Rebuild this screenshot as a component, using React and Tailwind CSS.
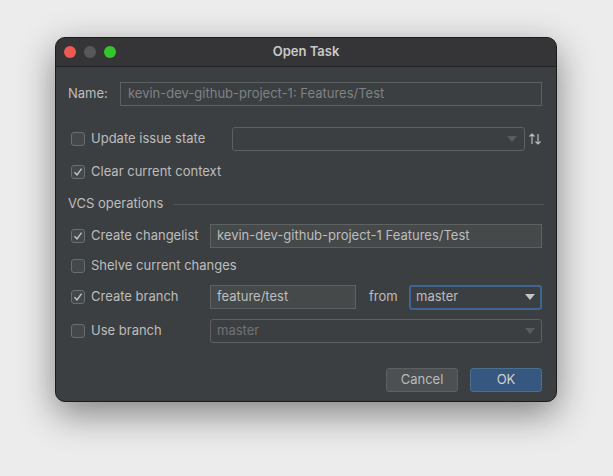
import React from "react";

function Check({ checked }) {
  return (
    <div className="w-[14px] h-[14px] rounded-[3px] border border-[#6b6e70] bg-[#43484a] flex items-center justify-center shrink-0">
      {checked && (
        <svg width="10" height="10" viewBox="0 0 10 10">
          <path d="M1.5 5.2 L4 7.8 L8.6 1.6" fill="none" stroke="#c4c4c4" strokeWidth="1.4" />
        </svg>
      )}
    </div>
  );
}

function Arrow({ color = "#c4c4c4" }) {
  return (
    <svg width="10" height="6" viewBox="0 0 10 6">
      <path d="M0 0 H10 L5 6 Z" fill={color} />
    </svg>
  );
}

function CheckRow({ checked, label, children, className = "" }) {
  return (
    <div className={"flex items-center h-[24px] " + className}>
      <div className="w-[142px] shrink-0 flex items-center pl-[3px] gap-[6px] whitespace-nowrap">
        <Check checked={checked} />
        <span>{label}</span>
      </div>
      {children}
    </div>
  );
}

export default function App() {
  return (
    <div
      className="w-[613px] h-[476px] bg-[#ececec] pt-[37px] pl-[55px] overflow-hidden text-[13px] text-[#bdbdbd]"
      style={{ fontFamily: "Inter, 'Noto Sans', sans-serif" }}
    >
      <div className="w-[502px] h-[365px] rounded-[10px] border border-[#1c1c1c] bg-[#3c3f41] overflow-hidden shadow-[0_12px_36px_rgba(0,0,0,0.45)] flex flex-col">
        {/* TITLE BAR */}
        <div className="h-[29px] bg-[#353537] border-b border-[#232323] flex items-center relative shrink-0">
          <div className="flex items-center gap-[8px] pl-[8px]">
            <div className="w-[12px] h-[12px] rounded-full bg-[#ee5a52]" />
            <div className="w-[12px] h-[12px] rounded-full bg-[#58575c]" />
            <div className="w-[12px] h-[12px] rounded-full bg-[#34c52c]" />
          </div>
          <div className="absolute inset-0 flex items-center justify-center font-semibold text-[13px] text-[#c9c9c9]">
            Open Task
          </div>
        </div>

        {/* BODY */}
        <div className="pl-[12px] pr-[14px] pt-[15px] flex flex-col">
          <div className="flex items-center h-[24px]">
            <span className="w-[52px]">Name:</span>
            <div className="flex-1 h-[24px] border border-[#5e6162] bg-[#3c3f41] flex items-center px-[7px] text-[#7f8284]">
              kevin-dev-github-project-1: Features/Test
            </div>
          </div>

          <CheckRow label="Update issue state" className="mt-[21px]">
            <div className="w-[22px] shrink-0" />
            <div className="w-[293px] h-[24px] border border-[#5e6162] rounded-[3px] flex items-center justify-end pr-[7px]">
              <Arrow color="#5a5d5f" />
            </div>
            <div className="flex-1 flex justify-end">
              <svg width="14" height="14" viewBox="0 0 14 14">
                <path d="M4 12 V2 M1.5 4.5 L4 2 L6.5 4.5 M10 2 V12 M7.5 9.5 L10 12 L12.5 9.5" fill="none" stroke="#bbbbbb" strokeWidth="1.2" />
              </svg>
            </div>
          </CheckRow>

          <CheckRow checked label="Clear current context" className="mt-[9px]" />

          <div className="flex items-center h-[24px] mt-[8px]">
            <span>VCS operations</span>
            <div className="flex-1 h-px bg-[#515456] ml-[10px] mr-[-2px]" />
          </div>

          <CheckRow checked label="Create changelist" className="mt-[8px]">
            <div className="flex-1 h-[24px] border border-[#5e6162] bg-[#45494a] flex items-center px-[6px]">
              kevin-dev-github-project-1 Features/Test
            </div>
          </CheckRow>

          <CheckRow label="Shelve current changes" className="mt-[6px]" />

          <CheckRow checked label="Create branch" className="mt-[7px]">
            <div className="w-[146px] shrink-0 h-[24px] border border-[#5e6162] bg-[#45494a] flex items-center px-[6px]">
              feature/test
            </div>
            <span className="w-[53px] shrink-0 pl-[13px]">from</span>
            <div className="flex-1 h-[25px] border-2 border-[#3c6591] rounded-[3px] bg-[#3c3f41] flex items-center justify-between pl-[5px] pr-[5px]">
              <span>master</span>
              <Arrow color="#c4c4c4" />
            </div>
          </CheckRow>

          <CheckRow label="Use branch" className="mt-[10px]">
            <div className="flex-1 h-[24px] border border-[#5e6162] rounded-[3px] flex items-center justify-between px-[6px] text-[#6f7274]">
              <span>master</span>
              <Arrow color="#5a5d5f" />
            </div>
          </CheckRow>

          <div className="flex justify-end gap-[12px] mt-[25px]">
            <button className="w-[72px] h-[24px] rounded-[3px] border border-[#5e6060] bg-[#4c5052] text-[#bbbbbb]">
              Cancel
            </button>
            <button className="w-[72px] h-[24px] rounded-[3px] border border-[#4c708c] bg-[#365880] text-[#d0d0d0]">
              OK
            </button>
          </div>
        </div>
      </div>
    </div>
  );
}
